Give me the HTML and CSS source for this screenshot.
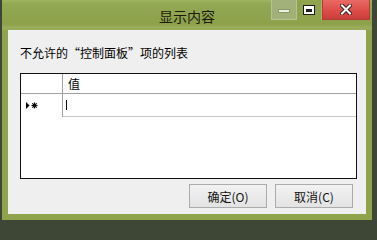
FILE: index.html
```html
<!DOCTYPE html>
<html lang="zh-CN">
<head>
<meta charset="utf-8">
<title>显示内容</title>
<link rel="stylesheet" href="styles.css">
</head>
<body>
<div class="window">
  <div class="titlebar">
    <div class="spacer"></div>
    <div class="title">显示内容</div>
    <div class="controls">
      <div class="ctl min">
        <svg width="12" height="4" viewBox="0 0 12 4"><rect x="0.5" y="0.5" width="11" height="3" fill="#eef1e2" stroke="#8a9868"/></svg>
      </div>
      <div class="ctl max">
        <svg width="12" height="10" viewBox="0 0 12 10"><rect x="0" y="0" width="12" height="10" fill="#1c1c1c"/><rect x="1" y="1" width="10" height="8" fill="#ffffff"/><rect x="3" y="4" width="6" height="3" fill="#1c1c1c"/></svg>
      </div>
      <div class="ctl close">
        <svg width="12" height="11" viewBox="0 0 12 11"><path d="M2 1.5 L10 9.5 M10 1.5 L2 9.5" stroke="#3a2020" stroke-width="4" stroke-linecap="square"/><path d="M2 1.5 L10 9.5 M10 1.5 L2 9.5" stroke="#ffffff" stroke-width="2" stroke-linecap="square"/></svg>
      </div>
    </div>
  </div>
  <div class="client">
    <div class="label">不允许的“控制面板”项的列表</div>
    <div class="grid">
      <div class="row head">
        <div class="rowhead"></div>
        <div class="cell">值</div>
      </div>
      <div class="row newrow">
        <div class="rowhead">
          <svg width="12" height="7" viewBox="0 0 12 7"><polygon points="0,0 3.5,3.5 0,7" fill="#000"/><path d="M8.5 0.5 V6.5 M5.5 3.5 H11.5 M6.3 1.3 L10.7 5.7 M10.7 1.3 L6.3 5.7" stroke="#000" stroke-width="1.2"/></svg>
        </div>
        <div class="cell"><span class="caret"></span></div>
      </div>
    </div>
    <div class="actions">
      <button class="btn">确定(O)</button>
      <button class="btn">取消(C)</button>
    </div>
  </div>
</div>
</body>
</html>
```

FILE: styles.css
```css
html, body {
  margin: 0;
  padding: 0;
}
body {
  width: 377px;
  height: 224px;
  overflow: hidden;
  background: #3e4636;
  font-family: "Noto Sans CJK SC", "Noto Sans", sans-serif;
}
.window {
  margin-left: 2px;
  width: 370px;
  height: 220px;
  box-sizing: border-box;
  padding-bottom: 6px;
  background: #8fa34d;
  display: flex;
  flex-direction: column;
}
.titlebar {
  height: 30px;
  flex: none;
  display: grid;
  grid-template-columns: 1fr auto 1fr;
  background: linear-gradient(#a0b462 0, #93a852 4px, #8da14b 24px, #98ac59 27px, #97ab58 30px);
}
.title {
  align-self: center;
  font-size: 14px;
  line-height: 18px;
  color: #1a1a10;
  padding-top: 1px;
}
.controls {
  justify-self: end;
  align-self: start;
  display: flex;
  margin-right: 2px;
  height: 20px;
}
.ctl {
  height: 20px;
  box-sizing: border-box;
  display: flex;
  align-items: center;
  justify-content: center;
}
.ctl.min {
  width: 26px;
  background: #a2b079;
  border: 1px solid #b7c392;
  border-top: none;
}
.ctl.min svg {
  margin-top: 3px;
}
.ctl.max {
  width: 25px;
  background: #8fa34d;
  border-right: 1px solid #a5b56e;
}
.ctl.close {
  width: 48px;
  background: linear-gradient(#ea6a66, #dc4a46 60%, #c9403c);
  border: 1px solid #b53b38;
  border-top: none;
}
.client {
  flex: 1;
  margin: 0 6px;
  background: #efefef;
  display: flex;
  flex-direction: column;
  padding: 15px 9px 6px 12px;
  box-sizing: border-box;
}
.label {
  font-size: 12px;
  line-height: 16px;
  color: #000;
}
.grid {
  margin-top: 12px;
  height: 106px;
  box-sizing: border-box;
  border: 1px solid #111;
  background: #fff;
}
.row {
  display: flex;
}
.row.head {
  height: 20px;
  box-sizing: border-box;
  border-bottom: 1px solid #a0a0a0;
}
.row.newrow {
  height: 23px;
}
.rowhead {
  width: 42px;
  flex: none;
  box-sizing: border-box;
  border-right: 1px solid #a0a0a0;
  display: flex;
  align-items: center;
  padding-left: 5px;
}
.cell {
  flex: 1;
  font-size: 12px;
  line-height: 19px;
  padding-left: 5px;
  color: #000;
  display: flex;
  align-items: center;
}
.newrow .cell {
  border-bottom: 1px solid #c8c8c8;
  padding-left: 3px;
}
.caret {
  display: block;
  width: 1px;
  height: 10px;
  background: #000;
}
.actions {
  margin-top: 5px;
  margin-right: 4px;
  display: flex;
  justify-content: flex-end;
  gap: 8px;
}
.btn {
  width: 78px;
  height: 24px;
  box-sizing: border-box;
  border: 1px solid #acacac;
  background: linear-gradient(#f2f2f2, #e3e3e3);
  font-family: "Noto Sans CJK SC", "Noto Sans", sans-serif;
  font-size: 12px;
  color: #111;
  padding: 0;
  margin: 0;
}
```
